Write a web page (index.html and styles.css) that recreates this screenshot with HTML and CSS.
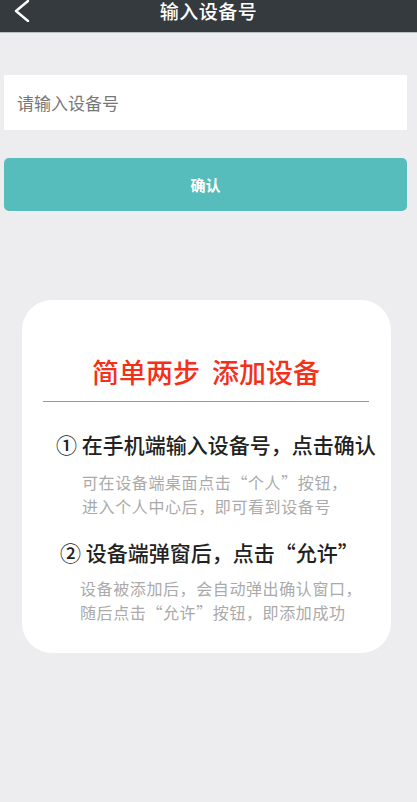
FILE: index.html
```html
<!DOCTYPE html>
<html lang="zh-CN">
  <head>
    <meta charset="UTF-8" />
    <meta name="viewport" content="width=device-width, initial-scale=1.0" />
    <title>输入设备号</title>
    <link rel="stylesheet" href="styles.css">
  </head>
  <body>
    <header class="topbar">
      <a class="back" href="#">
        <svg width="18" height="22" viewBox="0 0 18 22">
          <path d="M15 1 L3 11 L15 21" fill="none" stroke="#fff" stroke-width="2.4" stroke-linecap="round" stroke-linejoin="round" />
        </svg>
      </a>
      <h1>输入设备号</h1>
    </header>

    <main class="content">
      <input class="device-input" type="text" placeholder="请输入设备号" />
      <button class="confirm">确认</button>

      <section class="guide">
        <h2>简单两步&nbsp;&nbsp;添加设备</h2>
        <div class="divider"></div>
        <div class="step">
          <h3>① 在手机端输入设备号，点击确认</h3>
          <p>可在设备端桌面点击“个人”按钮，<br />进入个人中心后，即可看到设备号</p>
        </div>
        <div class="step step-two">
          <h3>② 设备端弹窗后，点击“允许”</h3>
          <p>设备被添加后，会自动弹出确认窗口，<br />随后点击“允许”按钮，即添加成功</p>
        </div>
      </section>
    </main>
  </body>
</html>
```

FILE: styles.css
```css
body {
  font-family: "Noto Sans CJK SC", "Noto Sans", sans-serif;
  background: #ededef;
  margin: 0;
  padding: 0;
  min-height: 100vh;
}

.topbar {
  height: 32px;
  background: #343a3e;
  border-bottom: 1px solid #b9bfc0;
  position: relative;
  display: flex;
  justify-content: center;
}

.topbar h1 {
  margin: 0;
  padding-top: 1px;
  color: #fff;
  font-size: 19px;
  font-weight: 500;
  letter-spacing: 0.5px;
  line-height: 20px;
}

.back {
  position: absolute;
  left: 13px;
  top: 0;
}

.content {
  padding: 42px 10px 0 4px;
}

.device-input {
  display: block;
  width: 100%;
  height: 55px;
  box-sizing: border-box;
  border: none;
  background: #fff;
  padding: 0 13px;
  font-family: inherit;
  font-size: 17px;
  outline: none;
}

.device-input::placeholder {
  color: #777;
}

.confirm {
  display: block;
  width: 100%;
  height: 53px;
  margin-top: 28px;
  background: #57bdbc;
  color: #fff;
  border: none;
  border-radius: 5px;
  font-family: inherit;
  font-size: 15px;
  font-weight: 700;
}

.guide {
  background: #fff;
  margin: 89px 16px 0 18px;
  border-radius: 30px;
  padding: 54px 22px 29px 21px;
}

.guide h2 {
  margin: 0;
  text-align: center;
  color: #f5301a;
  font-size: 27px;
  font-weight: 500;
  line-height: 36px;
}

.divider {
  height: 1px;
  background: #999;
  margin-top: 11px;
}

.step {
  margin-top: 27px;
}

.step h3 {
  margin: 0 0 0 13px;
  color: #222;
  font-size: 21px;
  font-weight: 500;
  line-height: 30px;
  white-space: nowrap;
}

.step p {
  margin: 11px 0 0 39px;
  color: #aaa;
  font-size: 16px;
  letter-spacing: 0.6px;
  line-height: 24px;
  white-space: nowrap;
}

.step-two {
  margin-top: 19px;
}

.step-two h3 {
  margin-left: 17px;
}

.step-two p {
  margin: 9px 0 0 37px;
}
```
